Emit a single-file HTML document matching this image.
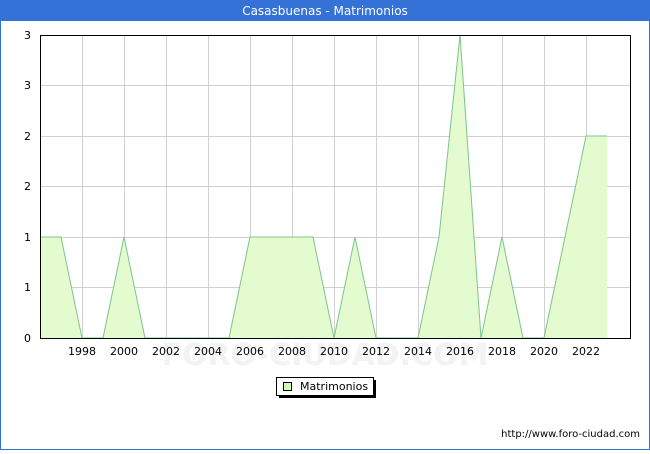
<!DOCTYPE html>
<html><head><meta charset="utf-8"><style>
body{margin:0;width:650px;height:450px;overflow:hidden;background:#fff;font-family:"DejaVu Sans","Liberation Sans",sans-serif}
</style></head><body>
<svg width="650" height="450" xmlns="http://www.w3.org/2000/svg" font-family="DejaVu Sans, Liberation Sans, sans-serif" font-size="11">
<rect x="0.5" y="0.5" width="649" height="449" fill="#fff" stroke="#3572d8"/>
<rect x="0" y="0" width="650" height="21" fill="#3572d8"/>
<text x="325" y="15" text-anchor="middle" fill="#fff" font-size="12">Casasbuenas - Matrimonios</text>
<g stroke="#d0d0d0" stroke-width="1">
<line x1="40" y1="287.5" x2="630" y2="287.5"/><line x1="40" y1="237.5" x2="630" y2="237.5"/>
<line x1="40" y1="186.5" x2="630" y2="186.5"/><line x1="40" y1="136.5" x2="630" y2="136.5"/>
<line x1="40" y1="85.5" x2="630" y2="85.5"/>
<line x1="82.5" y1="35" x2="82.5" y2="338"/><line x1="124.5" y1="35" x2="124.5" y2="338"/>
<line x1="166.5" y1="35" x2="166.5" y2="338"/><line x1="208.5" y1="35" x2="208.5" y2="338"/>
<line x1="250.5" y1="35" x2="250.5" y2="338"/><line x1="292.5" y1="35" x2="292.5" y2="338"/>
<line x1="334.5" y1="35" x2="334.5" y2="338"/><line x1="376.5" y1="35" x2="376.5" y2="338"/>
<line x1="418.5" y1="35" x2="418.5" y2="338"/><line x1="460.5" y1="35" x2="460.5" y2="338"/>
<line x1="502.5" y1="35" x2="502.5" y2="338"/><line x1="544.5" y1="35" x2="544.5" y2="338"/>
<line x1="586.5" y1="35" x2="586.5" y2="338"/>
</g>
<polygon fill="#e4fbd0" points="40,338 40,237 61,237 82,338 103,338 124,237 145,338 229,338 250,237 313,237 334,338 355,237 376,338 418,338 439,237 460,35 481,338 502,237 523,338 544,338 565,237 586,136 607,136 607,338"/>
<polyline fill="none" stroke="#7cc48a" stroke-width="1" points="40,237 61,237 82,338 103,338 124,237 145,338 229,338 250,237 313,237 334,338 355,237 376,338 418,338 439,237 460,35 481,338 502,237 523,338 544,338 565,237 586,136 607,136"/>
<text x="325" y="365" text-anchor="middle" fill="#f3f3f3" font-size="30" font-weight="bold">FORO-CIUDAD.COM</text>
<rect x="40.5" y="35.5" width="590" height="303" fill="none" stroke="#000"/>
<g text-anchor="end" fill="#000">
<text x="31" y="342">0</text><text x="31" y="291">1</text><text x="31" y="241">1</text>
<text x="31" y="190">2</text><text x="31" y="140">2</text><text x="31" y="89">3</text><text x="31" y="39">3</text>
</g>
<g text-anchor="middle" fill="#000">
<text x="82" y="355">1998</text><text x="124" y="355">2000</text><text x="166" y="355">2002</text>
<text x="208" y="355">2004</text><text x="250" y="355">2006</text><text x="292" y="355">2008</text>
<text x="334" y="355">2010</text><text x="376" y="355">2012</text><text x="418" y="355">2014</text>
<text x="460" y="355">2016</text><text x="502" y="355">2018</text><text x="544" y="355">2020</text>
<text x="586" y="355">2022</text>
</g>
<rect x="279" y="380" width="97" height="18" fill="#000"/>
<rect x="276.5" y="377.5" width="97" height="18" fill="#fff" stroke="#000"/>
<rect x="283.5" y="382.5" width="8" height="8" fill="#d8f8b8" stroke="#000"/>
<text x="300" y="390" fill="#000">Matrimonios</text>
<text x="640" y="437" text-anchor="end" fill="#000" font-size="10">http://www.foro-ciudad.com</text>
</svg>
</body></html>
